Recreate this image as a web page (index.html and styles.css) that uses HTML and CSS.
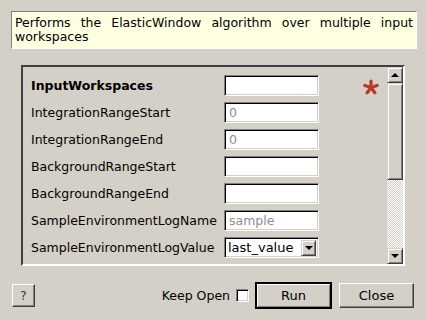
FILE: index.html
```html
<!DOCTYPE html>
<html>
<head>
<meta charset="utf-8">
<link rel="stylesheet" href="styles.css">
</head>
<body>
<div class="dialog">
  <div class="desc">Performs the ElasticWindow algorithm over multiple input workspaces</div>
  <div class="panel">
    <div class="content">
      <div class="row">
        <span class="label bold">InputWorkspaces</span>
        <span class="field"></span>
        <svg class="star" width="16" height="16" viewBox="0 0 16 16">
          <g stroke="#b8392b" stroke-width="3.2" stroke-linecap="round">
            <line x1="8" y1="8.5" x2="8" y2="2"/>
            <line x1="8" y1="8.5" x2="14.2" y2="6.5"/>
            <line x1="8" y1="8.5" x2="11.8" y2="13.8"/>
            <line x1="8" y1="8.5" x2="4.2" y2="13.8"/>
            <line x1="8" y1="8.5" x2="1.8" y2="6.5"/>
          </g>
        </svg>
      </div>
      <div class="row">
        <span class="label">IntegrationRangeStart</span>
        <span class="field"><span class="ph">0</span></span>
      </div>
      <div class="row">
        <span class="label">IntegrationRangeEnd</span>
        <span class="field"><span class="ph">0</span></span>
      </div>
      <div class="row">
        <span class="label">BackgroundRangeStart</span>
        <span class="field"></span>
      </div>
      <div class="row">
        <span class="label">BackgroundRangeEnd</span>
        <span class="field"></span>
      </div>
      <div class="row">
        <span class="label">SampleEnvironmentLogName</span>
        <span class="field"><span class="ph">sample</span></span>
      </div>
      <div class="row">
        <span class="label">SampleEnvironmentLogValue</span>
        <span class="field combo"><span class="val">last_value</span><span class="dropbtn"><span class="tri-down"></span></span></span>
      </div>
    </div>
    <div class="scrollbar">
      <div class="sbtn"><span class="tri-up"></span></div>
      <div class="thumb"></div>
      <div class="track"></div>
      <div class="sbtn"><span class="tri-down"></span></div>
    </div>
  </div>
  <div class="footer">
    <button class="btn help">?</button>
    <span class="spacer"></span>
    <span class="keep">Keep Open</span>
    <span class="check"></span>
    <button class="btn run">Run</button>
    <button class="btn close">Close</button>
  </div>
</div>
</body>
</html>
```
FILE: styles.css
```css
html, body {
  margin: 0;
  padding: 0;
  background: #d4d0c8;
}
body {
  width: 426px;
  height: 320px;
  overflow: hidden;
  font-family: "DejaVu Sans", sans-serif;
  font-size: 12.5px;
  color: #000;
}
.dialog {
  display: flex;
  flex-direction: column;
  padding: 11px 0 0 0;
}
.desc {
  margin-left: 11px;
  width: 398px;
  padding: 4px 3px;
  line-height: 14px;
  background: #ffffe1;
  border: 1px solid;
  border-color: #808080 #ffffff #ffffff #808080;
  text-align: justify;
}
.panel {
  margin: 16px 0 0 21px;
  width: 380px;
  height: 197px;
  border: 2px solid;
  border-color: #404040 #ffffff #ffffff #404040;
  display: flex;
}
.content {
  flex: 1;
  padding: 8px 0 0 8px;
  display: flex;
  flex-direction: column;
  gap: 6px;
}
.row {
  display: flex;
  align-items: center;
  height: 21px;
  flex-shrink: 0;
}
.label {
  width: 193px;
  white-space: nowrap;
}
.bold {
  font-weight: bold;
}
.field {
  box-sizing: border-box;
  width: 95px;
  height: 21px;
  background: #fff;
  border: 1px solid;
  border-color: #808080 #ffffff #ffffff #808080;
  box-shadow: inset 1px 1px 0 #000, inset -1px -1px 0 #d4d0c8;
  display: flex;
  align-items: center;
  padding-left: 4px;
}
.ph {
  color: #8e8e8e;
}
.combo {
  padding-left: 3px;
  justify-content: space-between;
  padding-right: 2px;
}
.val {
  font-size: 13px;
}
.dropbtn {
  box-sizing: border-box;
  width: 15px;
  height: 16px;
  background: #d4d0c8;
  border: 1px solid;
  border-color: #d4d0c8 #404040 #404040 #d4d0c8;
  box-shadow: inset 1px 1px 0 #fff, inset -1px -1px 0 #808080;
  display: flex;
  align-items: center;
  justify-content: center;
}
.star {
  margin-left: 44px;
  margin-top: 2px;
}
.scrollbar {
  width: 16px;
  display: flex;
  flex-direction: column;
}
.sbtn, .thumb {
  box-sizing: border-box;
  background: #d4d0c8;
  border: 1px solid;
  border-color: #d4d0c8 #404040 #404040 #d4d0c8;
  box-shadow: inset 1px 1px 0 #fff, inset -1px -1px 0 #808080;
}
.sbtn {
  height: 16px;
  display: flex;
  align-items: center;
  justify-content: center;
}
.thumb {
  height: 97px;
}
.track {
  flex: 1;
  background: repeating-conic-gradient(#ffffff 0 25%, #d4d0c8 0 50%) 0 0 / 2px 2px;
}
.tri-up {
  width: 0;
  height: 0;
  border-left: 4px solid transparent;
  border-right: 4px solid transparent;
  border-bottom: 4px solid #000;
}
.tri-down {
  width: 0;
  height: 0;
  border-left: 4px solid transparent;
  border-right: 4px solid transparent;
  border-top: 4px solid #000;
}
.footer {
  display: flex;
  align-items: center;
  margin-top: 16px;
  padding: 0 12px;
  height: 27px;
}
.spacer {
  flex: 1;
}
.btn {
  box-sizing: border-box;
  font-family: "DejaVu Sans", sans-serif;
  font-size: 13px;
  color: #000;
  background: #d4d0c8;
  border: 1px solid;
  border-color: #fff #404040 #404040 #fff;
  box-shadow: inset -1px -1px 0 #808080;
  padding: 0;
  margin: 0;
}
.help {
  width: 23px;
  height: 23px;
  font-size: 12px;
  color: #333;
}
.keep {
  font-size: 12.5px;
  margin-right: 6px;
}
.check {
  box-sizing: border-box;
  width: 13px;
  height: 13px;
  background: #fff;
  border: 1px solid;
  border-color: #808080 #fff #fff #808080;
  box-shadow: inset 1px 1px 0 #000, inset -1px -1px 0 #d4d0c8;
  margin-right: 6px;
}
.run {
  width: 77px;
  height: 27px;
  border: 2px solid;
  border-color: #000;
  box-shadow: inset 1px 1px 0 #fff, inset -1px -1px 0 #808080;
  margin-right: 7px;
}
.close {
  width: 75px;
  height: 25px;
}
```
